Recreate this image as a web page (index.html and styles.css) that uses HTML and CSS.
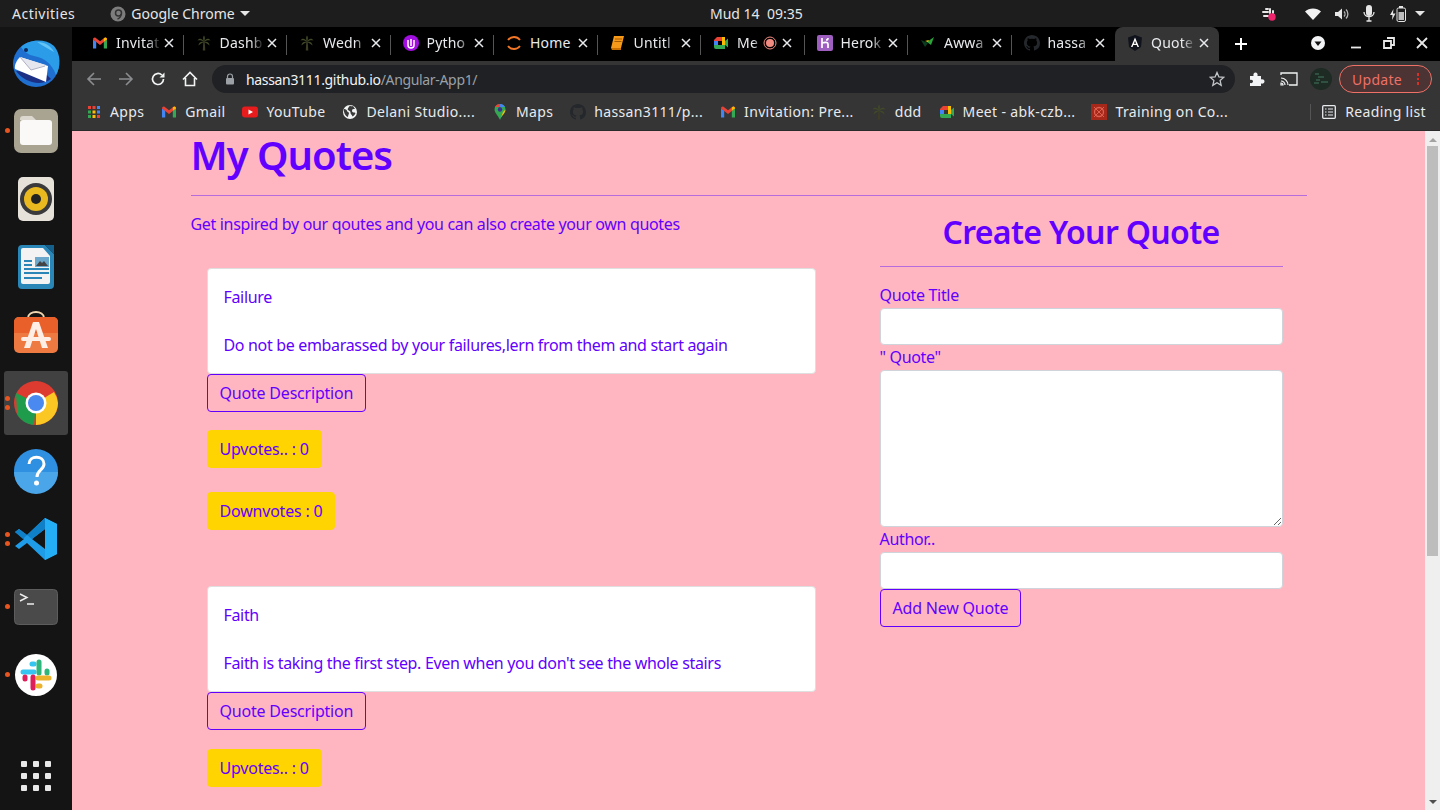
FILE: index.html
```html
<!DOCTYPE html>
<html lang="en">
<head>
  <meta charset="UTF-8">
  <title>Quotes</title>
  <link rel="stylesheet" href="styles.css">
</head>
<body>

  <svg class="defs" width="0" height="0">
    <symbol id="gmail" viewBox="0 0 16 16">
      <path d="M1 13.500V4.500l3.200 2v7H2z" fill="#4285f4"/>
      <path d="M15 13.500V4.500l-3.200 2v7H14z" fill="#34a853"/>
      <path d="M1 4.500C1 3 2.500 2 3.800 3L8 6.200 12.200 3C13.500 2 15 3 15 4.500L8 10z" fill="#ea4335"/>
      <path d="M11.800 3.300 13 2.700c1.200-.4 2 .6 2 1.800l-3.200 2.300z" fill="#fbbc04"/>
    </symbol>
    <symbol id="palm" viewBox="0 0 16 16">
      <path d="M7.300 7h1.400l.6 8.500H6.800z" fill="#3d3d26"/>
      <path d="M8 7C6 3 3 3 1.500 5.500c2-.6 4.500-.5 6.500 1.500zm0 0c2-4 5-4 6.500-1.500C12.500 4.900 10 5 8 7zM8 7C6.800 4 6.800 2 8 .5 9.200 2 9.200 4 8 7zM8 7C5 6 2.500 8 2.500 10.500 4 9 6 8 8 7zm0 0c3-1 5.500 1 5.500 3.500C12 9 10 8 8 7z" fill="#414a28"/>
    </symbol>
    <symbol id="github" viewBox="0 0 16 16">
      <path fill="#24272b" d="M8 0C3.600 0 0 3.600 0 8c0 3.500 2.300 6.500 5.500 7.600.4.100.5-.2.500-.4v-1.400c-2.200.5-2.700-1-2.700-1-.4-.9-.9-1.200-.9-1.200-.7-.5.100-.5.100-.5.800.1 1.200.8 1.200.8.700 1.200 1.900.9 2.300.7.100-.5.300-.9.500-1.100-1.800-.2-3.600-.9-3.600-4 0-.9.300-1.600.8-2.100-.1-.2-.4-1 .1-2.100 0 0 .7-.2 2.200.8a7.600 7.600 0 0 1 4 0c1.500-1 2.200-.8 2.200-.8.400 1.100.2 1.900.1 2.100.5.600.8 1.300.8 2.100 0 3.100-1.900 3.700-3.700 3.900.3.300.6.700.6 1.500v2.200c0 .2.100.5.600.4A8 8 0 0 0 16 8c0-4.400-3.600-8-8-8z"/>
    </symbol>
    <symbol id="meet" viewBox="0 0 16 16">
      <path d="M1 5h4v6H1z" fill="#4285f4"/>
      <path d="M1 5l3-3h6v4H1z" fill="#ea4335"/>
      <path d="M9 2h3v9H9z" fill="#fbbc04"/>
      <path d="M1 10h11v4H3a2 2 0 0 1-2-2z" fill="#34a853"/>
      <path d="M12 6l3-2.500v9L12 10z" fill="#34a853"/>
    </symbol>
    <symbol id="close" viewBox="0 0 12 12">
      <path d="M2 2l8 8M10 2l-8 8" stroke="#e8eaed" stroke-width="1.500" fill="none"/>
    </symbol>
  </svg>

  <header class="topbar">
    <div class="topbar-left">
      <span class="activities">Activities</span>
      <span class="app-menu">
        <svg class="app-logo" width="16" height="16" viewBox="0 0 16 16"><circle cx="8" cy="8" r="7.500" fill="#7d7d7d"/><circle cx="8.500" cy="7" r="3" fill="none" stroke="#333" stroke-width="1.500"/><path d="M11 8c0 3-2 4.500-3.500 5" stroke="#333" stroke-width="1.500" fill="none"/></svg>
        Google Chrome
        <i class="caret"></i>
      </span>
    </div>
    <div class="clock">Mud 14&nbsp; 09:35</div>
    <div class="tray">
      <svg class="tray-slack" width="16" height="16" viewBox="0 0 16 16"><path d="M2 6h5M5 3h2M3 10h4M9 3v4M12 5v2M9 9h4M9 12h2" stroke="#e6e6e6" stroke-width="2" stroke-linecap="round"/><circle cx="11" cy="11" r="3.700" fill="#f0246c"/></svg>
      <svg class="tray-wifi" width="16" height="16" viewBox="0 0 16 16"><path d="M0 5.500C2 3.600 5 2.500 8 2.500s6 1.100 8 3L8 14z" fill="#f2f2f2"/></svg>
      <svg class="tray-vol" width="16" height="16" viewBox="0 0 16 16"><path d="M1 6h3l4-3.500v11L4 10H1z" fill="#e6e6e6"/><path d="M10 5.500c1.300 1.300 1.300 3.700 0 5M12 3.500c2.500 2.500 2.500 6.500 0 9" stroke="#b5b5b5" stroke-width="1.300" fill="none"/></svg>
      <svg class="tray-mic" width="12" height="17" viewBox="0 0 12 17"><rect x="3" y="0" width="6" height="11" rx="3" fill="#e6e6e6"/><path d="M1 7c0 6 10 6 10 0M6 12v4M3.500 16h5" stroke="#e6e6e6" stroke-width="1.300" fill="none"/></svg>
      <svg class="tray-bat" width="16" height="16" viewBox="0 0 16 16"><path d="M3.500 3 0 9h2.500L2 14l3.500-6.500H3z" fill="#e6e6e6"/><rect x="7" y="2" width="8.500" height="13.500" rx="1.500" fill="none" stroke="#e6e6e6"/><rect x="9" y="0" width="4" height="2" fill="#e6e6e6"/><rect x="8.500" y="6" width="5.500" height="8" fill="#bdbdbd"/></svg>
      <i class="caret"></i>
    </div>
  </header>

  <div class="desktop">
    <nav class="dock">
      <div class="dock-item">
        <svg width="50" height="50" viewBox="0 0 50 50"><circle cx="25" cy="26" r="23" fill="#1f6fd0"/><path d="M10 9c8-8 24-9 33-1 7 8 7 21 2 29C41 26 34 20 23 18 18 17 13 14 10 9z" fill="#2a9ce8"/><path d="M26 4c8 0 14 4 17 10-6-3-12-7-17-10z" fill="#63c4f5"/><path d="M5 33c8 11 24 16 35 8l-6-6z" fill="#1b2f85"/><path d="M9 19 37 28l-2 16L4 31c-1-4 2-9 5-12z" fill="#fff"/><path d="M9 19l11 13 15-5" fill="#e6e6ee"/><path d="M9 19l11 13 14-4" stroke="#b0b0c4" fill="none"/><circle cx="15" cy="12" r="2" fill="#10285e"/></svg>
      </div>
      <div class="dock-item running">
        <svg width="46" height="46" viewBox="0 0 46 46"><rect x="1" y="1" width="44" height="44" rx="7" fill="#a9a391"/><path d="M7 11c0-2 1-3 3-3h9l4 4H7z" fill="#dcd8cf"/><rect x="7" y="12" width="32" height="25" rx="3" fill="#faf9f7"/></svg>
      </div>
      <div class="dock-item">
        <svg width="38" height="46" viewBox="0 0 38 46"><rect x="1" y="1" width="36" height="44" rx="5" fill="#e6e2da"/><circle cx="19" cy="23" r="16" fill="#3a3a3c"/><circle cx="19" cy="23" r="12" fill="#e9b91f"/><circle cx="19" cy="23" r="5" fill="#222"/></svg>
      </div>
      <div class="dock-item">
        <svg width="38" height="46" viewBox="0 0 38 46"><path d="M5 1h23l9 9v31a4 4 0 0 1-4 4H5a4 4 0 0 1-4-4V5a4 4 0 0 1 4-4z" fill="#2a86b6"/><path d="M28 1l9 0v9z" fill="#145f8c"/><path d="M6 4h20l7 8v26a2 2 0 0 1-2 2H6a2 2 0 0 1-2-2V6a2 2 0 0 1 2-2z" fill="#f3f3f3"/><path d="M7 16h8v2H7zM7 20h8v2H7zM7 24h25v2H7zM7 28h25v2H7zM7 33h18v2H7z" fill="#2a86b6"/><rect x="18" y="13" width="14" height="10" fill="#6ba8cc"/><path d="M19 22l4-5 2 2 2-2 4 5z" fill="#444"/></svg>
      </div>
      <div class="dock-item">
        <svg class="store" width="46" height="43" viewBox="0 0 46 43"><path d="M15 7c0-8 16-8 16 0" fill="none" stroke="#f0d6b0" stroke-width="2"/><rect x="1" y="6" width="44" height="36" rx="5" fill="#ee7a42"/><path d="M1 11a5 5 0 0 1 5-5h34a5 5 0 0 1 5 5v11H1z" fill="#e9602a"/><path d="M20 11h6l9 26h-6l-6-19-6 19h-6z" fill="#fdeee6"/><rect x="8" y="26" width="30" height="4" rx="2" fill="#fdeee6"/></svg>
      </div>
      <div class="dock-item running two active">
        <svg width="46" height="46" viewBox="0 0 46 46"><circle cx="23" cy="23" r="22" fill="#de3b30"/><path d="M23 23 23 45A22 22 0 0 0 45 23 22 22 0 0 0 41 12z" fill="#fbc723"/><path d="M4 34 3 13l20 10-2 22C13 44 7 40 4 34z" fill="#1e9b4b"/><circle cx="23" cy="23" r="10.500" fill="#fff"/><circle cx="23" cy="23" r="8" fill="#4a89f0"/></svg>
      </div>
      <div class="dock-item">
        <svg width="46" height="46" viewBox="0 0 46 46"><circle cx="23" cy="23" r="22" fill="#2f8fe0"/><path d="M1 24h44a22 22 0 0 1-44 0z" fill="#4ba6e9"/><path d="M16 16c0-9 15-9 15 0 0 6-7 6-7 13" fill="none" stroke="#fff" stroke-width="3"/><circle cx="23.500" cy="35" r="2.500" fill="#fff"/></svg>
      </div>
      <div class="dock-item running two">
        <svg width="44" height="44" viewBox="0 0 44 44"><path d="M31 1l12 6v30l-12 6L13 26 5 32l-4-3 9-7-9-7 4-3 8 6zm0 11L18 22l13 10z" fill="#1f9ce8"/><path d="M31 1l12 6v30l-12 6z" fill="#23aef5"/><path d="M1 15l4-3 8 6-4 4zM31 1 13 18l5 4L31 12z" fill="#0f7fc8"/></svg>
      </div>
      <div class="dock-item running">
        <svg width="44" height="36" viewBox="0 0 44 36"><rect x=".5" y=".5" width="43" height="35" rx="4" fill="#4a4a4a" stroke="#5d5d5d"/><path d="M6 5l7 3.500L6 12" fill="none" stroke="#eee" stroke-width="1.400"/><path d="M13 15h7" stroke="#eee" stroke-width="1.500"/></svg>
      </div>
      <div class="dock-item running">
        <svg width="42" height="42" viewBox="0 0 42 42"><circle cx="21" cy="21" r="21" fill="#fff"/><path d="M8 18h11" stroke="#36c5f0" stroke-width="5" stroke-linecap="round"/><path d="M17 10h2" stroke="#36c5f0" stroke-width="5" stroke-linecap="round"/><path d="M24 8v11" stroke="#2eb67d" stroke-width="5" stroke-linecap="round"/><path d="M32 17v2" stroke="#2eb67d" stroke-width="5" stroke-linecap="round"/><path d="M23 24h11" stroke="#ecb22e" stroke-width="5" stroke-linecap="round"/><path d="M23 32h2" stroke="#ecb22e" stroke-width="5" stroke-linecap="round"/><path d="M18 23v11" stroke="#e01e5a" stroke-width="5" stroke-linecap="round"/><path d="M10 23v2" stroke="#e01e5a" stroke-width="5" stroke-linecap="round"/></svg>
      </div>
      <div class="dock-grid">
        <i></i><i></i><i></i><i></i><i></i><i></i><i></i><i></i><i></i>
      </div>
    </nav>

    <div class="browser">
      <div class="tabstrip">
        <div class="tab"><svg class="fav"><use href="#gmail"/></svg><span class="tab-title">Invitat</span><svg class="tab-x"><use href="#close"/></svg></div>
        <div class="tab"><svg class="fav"><use href="#palm"/></svg><span class="tab-title">Dashb</span><svg class="tab-x"><use href="#close"/></svg></div>
        <div class="tab"><svg class="fav"><use href="#palm"/></svg><span class="tab-title">Wedn</span><svg class="tab-x"><use href="#close"/></svg></div>
        <div class="tab"><svg class="fav" viewBox="0 0 16 16"><circle cx="8" cy="8" r="8" fill="#a10ee0"/><path d="M5 5v5a3 3 0 0 0 6 0V5M8 4v7" stroke="#fff" stroke-width="1.500" fill="none"/></svg><span class="tab-title">Pytho</span><svg class="tab-x"><use href="#close"/></svg></div>
        <div class="tab"><svg class="fav" viewBox="0 0 16 16"><path d="M2 5c3-4 9-4 12 0M2 11c3 4 9 4 12 0" stroke="#f37726" stroke-width="1.800" fill="none"/></svg><span class="tab-title solid">Home</span><svg class="tab-x"><use href="#close"/></svg></div>
        <div class="tab"><svg class="fav" viewBox="0 0 16 16"><path d="M4 1h10l-3 12H1z" fill="#f79a1a"/><path d="M1 13h10l0 2H2z" fill="#c96f00"/><path d="M5 4h7M4.500 6.500h7" stroke="#a85a00"/></svg><span class="tab-title">Untitl</span><svg class="tab-x"><use href="#close"/></svg></div>
        <div class="tab"><svg class="fav"><use href="#meet"/></svg><span class="tab-title short">Me</span><svg class="rec" width="14" height="14" viewBox="0 0 14 14"><circle cx="7" cy="7" r="6" fill="none" stroke="#f28b82"/><circle cx="7" cy="7" r="4" fill="#f28b82"/></svg><svg class="tab-x"><use href="#close"/></svg></div>
        <div class="tab"><svg class="fav" viewBox="0 0 16 16"><rect width="16" height="16" rx="2" fill="#9e5fc0"/><path d="M5 3v10M5 8c3-1 6-1 6 1v4M11 3c0 1-1 2-2 2" stroke="#fff" stroke-width="1.700" fill="none"/></svg><span class="tab-title">Herok</span><svg class="tab-x"><use href="#close"/></svg></div>
        <div class="tab"><svg class="fav" viewBox="0 0 16 16"><path d="M1 5l7 3-3 4z" fill="#0a3d1e"/><path d="M7 7l7-5-3 8z" fill="#2aa53a"/><path d="M5 6l4-1-1 2z" fill="#e4d31a"/></svg><span class="tab-title">Awwa</span><svg class="tab-x"><use href="#close"/></svg></div>
        <div class="tab"><svg class="fav"><use href="#github"/></svg><span class="tab-title">hassa</span><svg class="tab-x"><use href="#close"/></svg></div>
        <div class="tab active"><svg class="fav" viewBox="0 0 16 16"><path d="M8 0 1 2.500 2 12l6 4 6-4 1-9.500z" fill="#10131c"/><path d="M8 2.500 4 12h1.500l.8-2h3.400l.8 2H12zM6.900 8.700 8 6l1.100 2.700z" fill="#fff"/></svg><span class="tab-title">Quote</span><svg class="tab-x"><use href="#close"/></svg></div>
        <svg class="newtab" width="14" height="14" viewBox="0 0 14 14"><path d="M7 1v12M1 7h12" stroke="#fff" stroke-width="2"/></svg>
        <div class="window-btns">
          <svg width="16" height="16" viewBox="0 0 16 16"><circle cx="8" cy="8" r="7" fill="#f1f3f4"/><path d="M4.500 6.500h7L8 11z" fill="#111"/></svg>
          <svg width="12" height="12" viewBox="0 0 12 12"><path d="M1 10.500h10" stroke="#e8e8e8" stroke-width="1.800"/></svg>
          <svg width="12" height="12" viewBox="0 0 12 12"><path d="M4 1h7v7H8M1 4h7v7H1z" fill="none" stroke="#e8e8e8" stroke-width="1.800"/></svg>
          <svg width="12" height="12" viewBox="0 0 12 12"><path d="M1 1l10 10M11 1 1 11" stroke="#e8e8e8" stroke-width="1.800"/></svg>
        </div>
      </div>

      <div class="toolbar">
        <svg class="nav-btn" width="16" height="16" viewBox="0 0 16 16"><path d="M15 8H2M8 2 2 8l6 6" fill="none" stroke="#8b8d90" stroke-width="1.600"/></svg>
        <svg class="nav-btn" width="16" height="16" viewBox="0 0 16 16"><path d="M1 8h13M8 2l6 6-6 6" fill="none" stroke="#8b8d90" stroke-width="1.600"/></svg>
        <svg class="nav-btn" width="16" height="16" viewBox="0 0 16 16"><path d="M13.500 8A5.500 5.500 0 1 1 11.800 4" fill="none" stroke="#f1f3f4" stroke-width="1.700"/><path d="M14.500 1.500v5h-5z" fill="#f1f3f4"/></svg>
        <svg class="nav-btn" width="16" height="16" viewBox="0 0 16 16"><path d="M1 8.500 8 1.500l7 7M3.500 7v7.500h9V7" fill="none" stroke="#f1f3f4" stroke-width="1.600"/></svg>
        <div class="omnibox">
          <svg width="10" height="12" viewBox="0 0 10 12"><path d="M2.500 5V3.500a2.500 2.500 0 0 1 5 0V5" fill="none" stroke="#9aa0a6" stroke-width="1.200"/><rect x="1" y="5" width="8" height="6.500" rx="1" fill="#9aa0a6"/></svg>
          <span class="url"><b>hassan3111.github.io</b>/Angular-App1/</span>
          <svg class="star" width="16" height="16" viewBox="0 0 16 16"><path d="M8 1.500 9.900 6l4.800.4-3.600 3.200 1.100 4.700L8 11.800l-4.200 2.500 1.100-4.700L1.300 6.400 6.100 6z" fill="none" stroke="#c4c7ca" stroke-width="1.300"/></svg>
        </div>
        <svg class="ext" width="16" height="16" viewBox="0 0 16 16"><path d="M1 5h3.500C4 3 5 1.500 6.500 1.500S9 3 8.500 5H12v3.500c2-.5 3.500.5 3.500 2s-1.500 2.500-3.500 2V15H1v-3c2 .5 3-.5 3-1.500S3 8.500 1 9z" fill="#f1f3f4"/></svg>
        <svg class="cast" width="18" height="14" viewBox="0 0 18 14"><path d="M1 3V1h16v12H9" fill="none" stroke="#f1f3f4" stroke-width="1.300"/><path d="M1 13h2a2 2 0 0 0-2-2zM1 9a4 4 0 0 1 4 4M1 6a7 7 0 0 1 7 7" stroke="#f1f3f4" stroke-width="1.200" fill="none"/></svg>
        <svg class="avatar" width="22" height="22" viewBox="0 0 22 22"><circle cx="11" cy="11" r="11" fill="#1e2a24"/><path d="M5 6h4M8 9h6M6 12h4M11 14h7M4 15h5" stroke="#4c8a72" stroke-width=".8"/></svg>
        <div class="update-btn">Update <span class="dots"><i></i><i></i><i></i></span></div>
      </div>

      <div class="bookmarks">
        <span class="bm"><svg width="14" height="14" viewBox="0 0 14 14"><path d="M1 1h3v3H1z" fill="#ea4335"/><path d="M5.500 1h3v3h-3z" fill="#ea4335"/><path d="M10 1h3v3h-3z" fill="#4285f4"/><path d="M1 5.500h3v3H1z" fill="#34a853"/><path d="M5.500 5.500h3v3h-3z" fill="#fbbc04"/><path d="M10 5.500h3v3h-3z" fill="#4285f4"/><path d="M1 10h3v3H1z" fill="#34a853"/><path d="M5.500 10h3v3h-3z" fill="#fbbc04"/><path d="M10 10h3v3h-3z" fill="#ea4335"/></svg>Apps</span>
        <span class="bm"><svg class="fav"><use href="#gmail"/></svg>Gmail</span>
        <span class="bm"><svg class="fav" viewBox="0 0 16 16"><rect y="2.500" width="16" height="11" rx="3" fill="#e81c1c"/><path d="M6.500 5.500v5L11 8z" fill="#fff"/></svg>YouTube</span>
        <span class="bm"><svg class="fav" viewBox="0 0 16 16"><circle cx="8" cy="8" r="7" fill="#f1f3f4"/><path d="M2 5c2 0 3 1 3 2s2 1 2 2-1 2-1 4C3 12 1.500 8 2 5zM8 1.500c1 1 2 1 3 .5l2 3c-2 0-3 0-3 2s3 1 3.500 2c-.5 2-2 3-3 3.500-.5-2-2-2-2-4S7 7 6 6s1-3 2-4.500z" fill="#3a3a3a"/></svg>Delani Studio....</span>
        <span class="bm"><svg class="fav" viewBox="0 0 16 16"><path d="M8 0a5.500 5.500 0 0 1 5.500 5.500C13.500 9 9.500 12 8 16 6.500 12 2.500 9 2.500 5.500A5.500 5.500 0 0 1 8 0z" fill="#34a853"/><path d="M3 3a5.500 5.500 0 0 1 5-3v3z" fill="#ea4335"/><path d="M8 0a5.500 5.500 0 0 1 5 3H8z" fill="#4285f4"/><path d="M11 8l2.500-2.500c0 3-3 5.500-4.500 8z" fill="#fbbc04"/><circle cx="8" cy="5.500" r="2.200" fill="#3a2f8f"/></svg>Maps</span>
        <span class="bm"><svg class="fav"><use href="#github"/></svg>hassan3111/p...</span>
        <span class="bm"><svg class="fav"><use href="#gmail"/></svg>Invitation: Pre...</span>
        <span class="bm"><svg class="fav"><use href="#palm"/></svg>ddd</span>
        <span class="bm"><svg class="fav"><use href="#meet"/></svg>Meet - abk-czb...</span>
        <span class="bm"><svg class="fav" viewBox="0 0 16 16"><rect width="16" height="16" fill="#a5281b"/><circle cx="8" cy="8" r="4.500" fill="none" stroke="#e0604f" stroke-width="1.300"/><path d="M3 3l10 10M13 3 3 13" stroke="#e0604f"/></svg>Training on Co...</span>
        <span class="reading"><svg width="14" height="14" viewBox="0 0 14 14"><rect x=".7" y=".7" width="12.600" height="12.600" rx="1" fill="none" stroke="#e8eaed" stroke-width="1.300"/><path d="M3 4h1.500M6 4h5M3 7h1.500M6 7h5M3 10h1.500M6 10h5" stroke="#e8eaed" stroke-width="1.200"/></svg>Reading list</span>
      </div>

      <div class="viewport">
        <main class="page">
          <div class="container">
            <h1>My Quotes</h1>
            <hr>
            <div class="row">
              <section class="col-left">
                <p class="intro">Get inspired by our qoutes and you can also create your own quotes</p>

                <div class="quote">
                  <div class="card">
                    <p>Failure</p>
                    <p>Do not be embarassed by your failures,lern from them and start again</p>
                  </div>
                  <button class="btn btn-outline">Quote Description</button>
                  <button class="btn btn-vote">Upvotes.. : 0</button>
                  <button class="btn btn-vote">Downvotes : 0</button>
                </div>

                <div class="quote">
                  <div class="card">
                    <p>Faith</p>
                    <p>Faith is taking the first step. Even when you don't see the whole stairs</p>
                  </div>
                  <button class="btn btn-outline">Quote Description</button>
                  <button class="btn btn-vote">Upvotes.. : 0</button>
                </div>
              </section>

              <aside class="col-right">
                <h2>Create Your Quote</h2>
                <hr class="form-rule">
                <form class="quote-form">
                  <label for="title">Quote Title</label>
                  <input id="title" type="text">
                  <label for="body">" Quote"</label>
                  <textarea id="body"></textarea>
                  <label for="author">Author..</label>
                  <input id="author" type="text">
                  <button type="button" class="btn btn-outline btn-add">Add New Quote</button>
                </form>
              </aside>
            </div>
          </div>
        </main>
        <div class="scrollbar">
          <i class="arrow-up"></i>
          <div class="track"><div class="thumb"></div></div>
          <i class="arrow-down"></i>
        </div>
      </div>
    </div>
  </div>

</body>
</html>
```

FILE: styles.css
```css
* { margin: 0; padding: 0; box-sizing: border-box; }
html, body { height: 100%; overflow: hidden; }
body { font-family: 'Noto Sans', sans-serif; display: flex; flex-direction: column; background: #141414; }
.defs { position: absolute; }

/* Ubuntu top bar */
.topbar { height: 27px; flex: none; background: #1d1d1d; color: #e6e6e6; font-size: 14px; display: flex; align-items: center; justify-content: space-between; padding: 0 15px 0 12px; position: relative; }
.topbar-left { display: flex; align-items: center; gap: 35px; }
.activities { letter-spacing: 0.5px; }
.app-menu { display: flex; align-items: center; gap: 5px; }
.app-logo { flex: none; }
.caret { display: inline-block; width: 0; height: 0; border-left: 5px solid transparent; border-right: 5px solid transparent; border-top: 5px solid #e6e6e6; }
.clock { position: absolute; left: 710px; top: 4px; }
.tray { display: flex; align-items: center; }
.tray-wifi { margin-left: 28px; }
.tray-vol { margin-left: 13px; }
.tray-mic { margin-left: 13px; }
.tray-bat { margin-left: 15px; }
.tray .caret { margin-left: 9px; }

.desktop { flex: 1; display: flex; min-height: 0; }

/* Dock */
.dock { width: 72px; flex: none; background: #141414; display: flex; flex-direction: column; padding-top: 2px; }
.dock-item { height: 68px; display: flex; align-items: center; justify-content: center; position: relative; }
.dock-item.active::before { content: ""; position: absolute; left: 4px; top: 2px; width: 64px; height: 64px; background: #414141; border-radius: 3px; }
.dock-item svg { position: relative; }
.dock-item .store { margin-top: -6px; }
.dock-item.running::after { content: ""; position: absolute; left: 5px; top: 31px; width: 5px; height: 5px; border-radius: 50%; background: #e9541f; }
.dock-item.two::after { top: 27px; box-shadow: 0 9px 0 #e9541f; }
.dock-grid { margin-top: 52px; align-self: center; display: grid; grid-template-columns: repeat(3, 6px); gap: 6px; }
.dock-grid i { width: 6px; height: 6px; border-radius: 1px; background: #e8e8e8; }

/* Chrome */
.browser { flex: 1; display: flex; flex-direction: column; min-width: 0; background: #353535; }
.tabstrip { height: 34px; flex: none; background: #000; display: flex; align-items: center; padding-left: 8px; }
.tab { width: 103.5px; height: 34px; flex: none; display: flex; align-items: center; padding: 0 9px 3px 12px; color: #e8eaed; font-size: 14px; letter-spacing: 0.2px; position: relative; }
.tab::after { content: ""; position: absolute; right: 0; top: 8px; height: 20px; width: 1px; background: #555; }
.tab.active { background: #353535; border-radius: 8px 8px 0 0; }
.tab.active::after, .tab:nth-child(10)::after { display: none; }
.fav { width: 16px; height: 16px; flex: none; }
.tab-title { flex: 1; margin-left: 8px; overflow: hidden; white-space: nowrap; -webkit-mask-image: linear-gradient(to right, #000 70%, transparent 100%); mask-image: linear-gradient(to right, #000 70%, transparent 100%); min-width: 0; }
.tab-title.solid { -webkit-mask-image: none; mask-image: none; }
.tab-x { width: 12px; height: 12px; flex: none; margin-left: 2px; }
.rec { flex: none; margin-right: 2px; }
.tab-title.short { flex: none; width: 24px; margin-right: 2px; }
.newtab { margin-left: 15px; flex: none; }
.window-btns { margin-left: auto; display: flex; align-items: center; gap: 21px; padding-right: 12px; padding-bottom: 3px; }
.window-btns svg:first-child { margin-right: 3px; }

.toolbar { height: 36px; flex: none; background: #353535; display: flex; align-items: center; padding-left: 14px; }
.nav-btn { flex: none; margin-right: 16px; }
.nav-btn:nth-child(4) { margin-right: 14px; }
.omnibox { width: 1023px; height: 28px; flex: none; background: #202124; border-radius: 14px; display: flex; align-items: center; padding: 0 10px 0 13px; gap: 11px; color: #9aa0a6; font-size: 14px; letter-spacing: -0.33px; }
.url b { color: #f1f3f4; font-weight: 400; }
.star { margin-left: auto; }
.ext { margin-left: 14px; flex: none; }
.cast { margin-left: 15px; flex: none; }
.avatar { margin-left: 12px; flex: none; }
.update-btn { margin-left: 7px; width: 93px; height: 28px; flex: none; border: 1px solid #ee7067; border-radius: 14px; background: #4b3433; color: #ee7067; font-size: 14px; letter-spacing: 0.3px; display: flex; align-items: center; justify-content: space-between; padding: 0 12px; }
.dots { display: flex; flex-direction: column; gap: 2px; }
.dots i { width: 2.500px; height: 2.500px; background: #d93025; }

.bookmarks { height: 34px; flex: none; background: #353535; border-bottom: 1px solid #2a2a2a; display: flex; align-items: center; padding: 0 0 4px 15px; color: #e8eaed; font-size: 14px; letter-spacing: 0.35px; gap: 17px; }
.bm { display: flex; align-items: center; gap: 8px; white-space: nowrap; }
.bm:first-child { gap: 9px; }
.bm:nth-child(10) { margin-left: -1px; }
.reading { margin-left: auto; margin-right: 14px; display: flex; align-items: center; gap: 9px; padding-left: 11px; border-left: 1px solid #555; height: 16px; }

/* page */
.viewport { flex: 1; display: flex; min-height: 0; }
.page { flex: 1; background: #ffb6c1; color: #6200ff; font-size: 16px; letter-spacing: -0.33px; line-height: 24px; min-width: 0; }
.container { width: 1140px; margin: 0 auto; padding: 0 12px; }
h1 { font-size: 40px; font-weight: 600; letter-spacing: -1px; line-height: 48px; }
hr { border: 0; border-top: 1px solid #b66cdc; margin: 16px 0; }
.row { display: flex; }
.col-left { width: 665px; flex: none; }
.intro { margin-bottom: 32px; }
.quote { margin-left: 16px; width: 609px; margin-bottom: 56px; display: flex; flex-direction: column; align-items: flex-start; }
.quote:last-child { margin-bottom: 0; }
.card { width: 100%; background: #fff; border: 1px solid #dfdfdf; border-radius: 4px; padding: 16px; }
.card p + p { margin-top: 24px; }
.btn { font: inherit; letter-spacing: -0.2px; color: inherit; height: 38px; padding: 0 12px; border-radius: 4px; cursor: pointer; }
.btn-outline { background: transparent; border: 1px solid #6200ff; }
.btn-vote { background: #ffd400; border: 1px solid #ffd400; margin-top: 18px; }
.btn-vote + .btn-vote { margin-top: 24px; }
.quote:last-child .btn-vote { margin-top: 19px; }
.col-right { width: 403px; margin-left: 24px; flex: none; }
h2 { font-size: 32px; font-weight: 600; letter-spacing: -0.65px; line-height: 38px; text-align: center; margin-top: 1px; }
.form-rule { margin: 15px 0 16px; }
.quote-form { display: flex; flex-direction: column; align-items: flex-start; }
.quote-form input, .quote-form textarea { width: 100%; background: #fff; border: 1px solid #ced4da; border-radius: 4px; display: block; }
.quote-form input { height: 37.500px; }
.quote-form textarea { height: 157.500px; }
.quote-form label { height: 24.500px; }

.scrollbar { width: 15px; flex: none; background: #efefef; display: flex; flex-direction: column; align-items: center; padding: 7px 0 6px; }
.arrow-up { width: 0; height: 0; border-left: 4px solid transparent; border-right: 4px solid transparent; border-bottom: 4px solid #a3a3a3; }
.arrow-down { width: 0; height: 0; border-left: 4px solid transparent; border-right: 4px solid transparent; border-top: 4px solid #505050; }
.track { flex: 1; width: 100%; padding: 4px 2px 0; }
.thumb { height: 410px; background: #bdbdbd; }
```
